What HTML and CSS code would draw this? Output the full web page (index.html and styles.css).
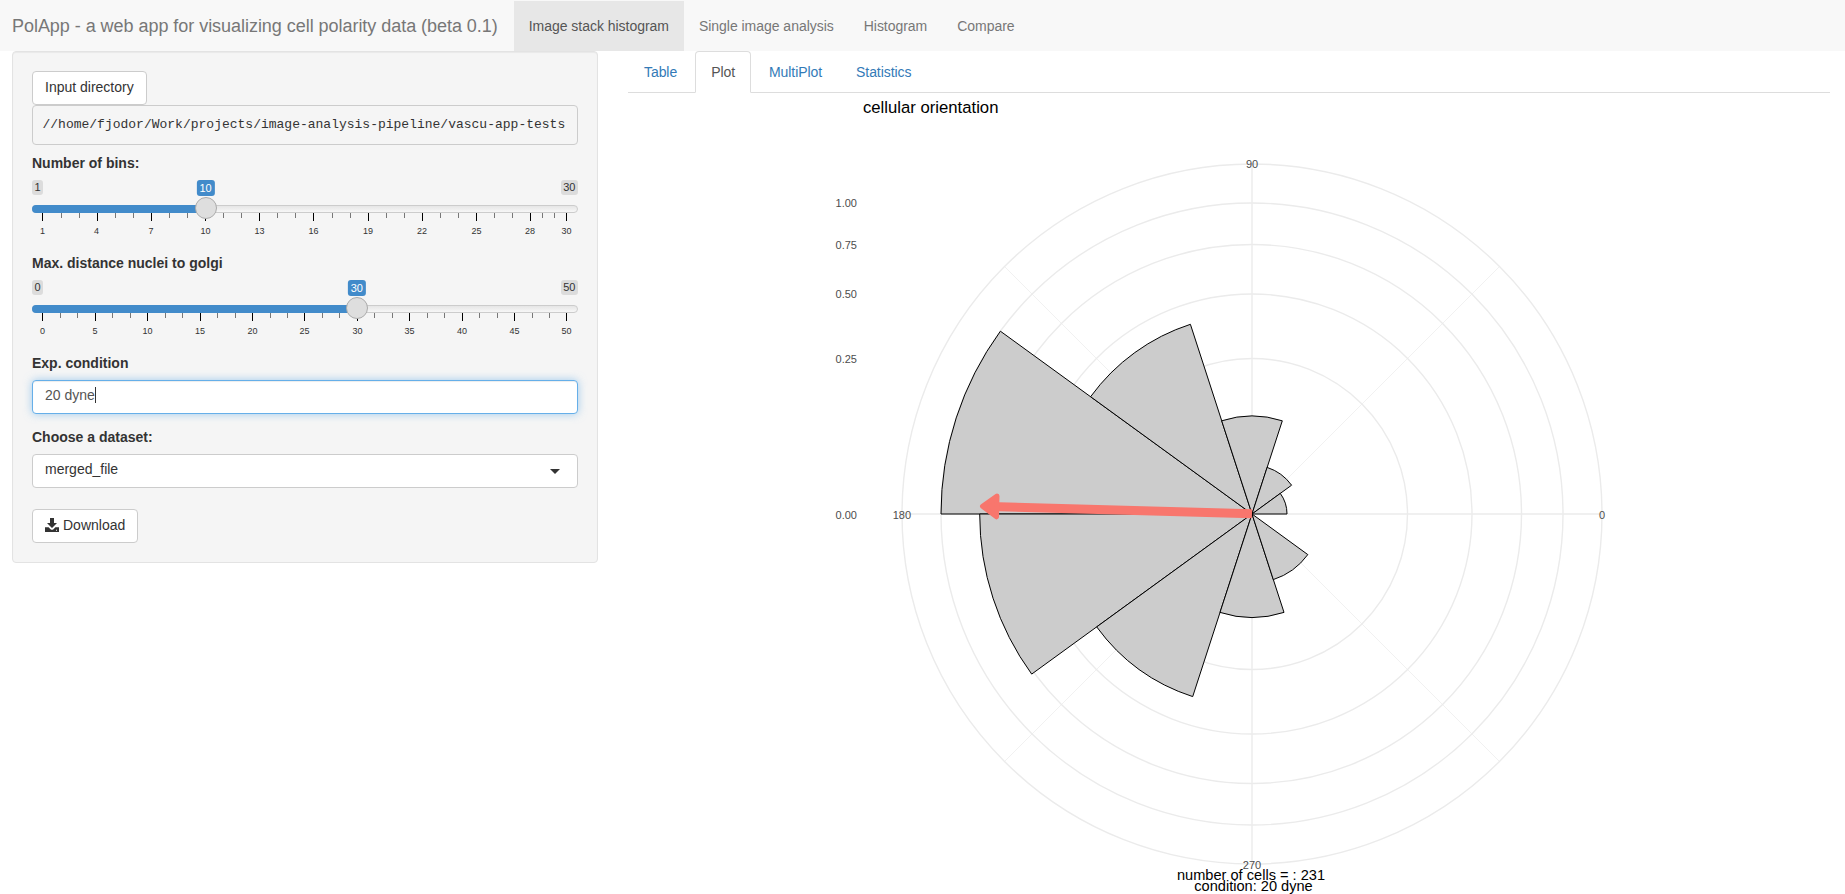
FILE: index.html
```html
<!DOCTYPE html>
<html lang="en">
<head>
    <meta charset="UTF-8">
    <meta name="viewport" content="width=device-width, initial-scale=1.0">
    <title>PolApp</title>
    <link rel="stylesheet" href="styles.css">
</head>
<body>
    <nav class="navbar">
        <span class="navbar-brand">PolApp - a web app for visualizing cell polarity data (beta 0.1)</span>
        <ul class="navbar-tabs">
            <li class="active"><a href="#">Image stack histogram</a></li>
            <li><a href="#">Single image analysis</a></li>
            <li><a href="#">Histogram</a></li>
            <li><a href="#">Compare</a></li>
        </ul>
    </nav>

    <div class="page">
        <aside class="well">
            <button type="button" class="btn">Input directory</button>
            <pre class="dir-path">//home/fjodor/Work/projects/image-analysis-pipeline/vascu-app-tests</pre>

            <div class="form-group first">
                <label class="control-label">Number of bins:</label>
                <div class="irs">
                    <div class="irs-limits"><span class="irs-limit">1</span><span class="irs-limit">30</span></div>
                    <div class="irs-line"><div class="irs-fill" style="width: 31.8%"></div></div>
                    <span class="irs-value" style="left: 31.8%">10</span>
                    <span class="irs-handle" style="left: 31.8%"></span>
                    <svg class="irs-grid" width="546" height="25">
                        <path class="tick-minor" d="M29.5 0v5M47.5 0v5M83.5 0v5M101.5 0v5M137.5 0v5M155.5 0v5M191.5 0v5M209.5 0v5M245.5 0v5M263.5 0v5M300.5 0v5M318.5 0v5M354.5 0v5M372.5 0v5M408.5 0v5M426.5 0v5M462.5 0v5M480.5 0v5M510.5 0v5M522.5 0v5"/>
                        <path class="tick-major" d="M10.5 0v8M65.5 0v8M119.5 0v8M173.5 0v8M227.5 0v8M281.5 0v8M336.5 0v8M390.5 0v8M444.5 0v8M498.5 0v8M534.5 0v8"/>
                        <text x="10.5" y="21">1</text>
                        <text x="64.5" y="21">4</text>
                        <text x="119" y="21">7</text>
                        <text x="173.5" y="21">10</text>
                        <text x="227.5" y="21">13</text>
                        <text x="281.5" y="21">16</text>
                        <text x="336" y="21">19</text>
                        <text x="390" y="21">22</text>
                        <text x="444.5" y="21">25</text>
                        <text x="498" y="21">28</text>
                        <text x="534.5" y="21">30</text>
                    </svg>
                </div>
            </div>

            <div class="form-group">
                <label class="control-label">Max. distance nuclei to golgi</label>
                <div class="irs">
                    <div class="irs-limits"><span class="irs-limit">0</span><span class="irs-limit">50</span></div>
                    <div class="irs-line"><div class="irs-fill" style="width: 59.5%"></div></div>
                    <span class="irs-value" style="left: 59.5%">30</span>
                    <span class="irs-handle" style="left: 59.5%"></span>
                    <svg class="irs-grid" width="546" height="25">
                        <path class="tick-minor" d="M28.5 0v5M45.5 0v5M80.5 0v5M98.5 0v5M133.5 0v5M150.5 0v5M185.5 0v5M203.5 0v5M238.5 0v5M255.5 0v5M290.5 0v5M307.5 0v5M342.5 0v5M360.5 0v5M395.5 0v5M412.5 0v5M447.5 0v5M465.5 0v5M500.5 0v5M517.5 0v5"/>
                        <path class="tick-major" d="M10.5 0v8M63.5 0v8M115.5 0v8M168.5 0v8M220.5 0v8M272.5 0v8M325.5 0v8M377.5 0v8M430.5 0v8M482.5 0v8M534.5 0v8"/>
                        <text x="10.5" y="21">0</text>
                        <text x="63" y="21">5</text>
                        <text x="115.5" y="21">10</text>
                        <text x="168" y="21">15</text>
                        <text x="220.5" y="21">20</text>
                        <text x="272.5" y="21">25</text>
                        <text x="325.5" y="21">30</text>
                        <text x="377.5" y="21">35</text>
                        <text x="430" y="21">40</text>
                        <text x="482.5" y="21">45</text>
                        <text x="534.5" y="21">50</text>
                    </svg>
                </div>
            </div>

            <div class="form-group field">
                <label class="control-label">Exp. condition</label>
                <div class="form-control focused">20 dyne<span class="caret-line"></span></div>
            </div>

            <div class="form-group field">
                <label class="control-label">Choose a dataset:</label>
                <div class="form-control select">merged_file<span class="select-arrow"></span></div>
            </div>

            <button type="button" class="btn btn-download">
                <svg class="icon-download" width="14" height="14" viewBox="0 0 14 14">
                    <path d="M5 0h4v5h3L7 10 2 5h3z"/>
                    <path d="M0 9.2h3.6l2.2 2.2c.7.6 1.7.6 2.4 0l2.2-2.2H14V14H0zM11 11.8h1v1h-1z" fill-rule="evenodd"/>
                </svg>
                Download
            </button>
        </aside>

        <main class="main-panel">
            <ul class="nav-tabs">
                <li><a href="#">Table</a></li>
                <li class="active"><a href="#">Plot</a></li>
                <li><a href="#">MultiPlot</a></li>
                <li><a href="#">Statistics</a></li>
            </ul>

            <svg class="plot" viewBox="628 93 1202 801" width="1202" height="801">
                <!-- grid -->
                <g class="grid-minor">
                    <path d="M1252 514L1499.5 266.5M1252 514L1004.5 266.5M1252 514L1004.5 761.5M1252 514L1499.5 761.5"/>
                </g>
                <g class="grid-major">
                    <circle cx="1252" cy="514" r="155.5"/>
                    <circle cx="1252" cy="514" r="220"/>
                    <circle cx="1252" cy="514" r="269.5"/>
                    <circle cx="1252" cy="514" r="311"/>
                    <circle cx="1252" cy="514" r="350"/>
                    <path d="M902 514H1602M1252 164V864"/>
                </g>

                <!-- bars -->
                <g class="bars">
                    <path d="M1252 514L1000.4 331.2A311 311 0 0 0 941 514Z"/>
                    <path d="M1252 514L1190.4 324.3A199.5 199.5 0 0 0 1090.6 396.7Z"/>
                    <path d="M1252 514L1282.3 420.8A98 98 0 0 0 1221.7 420.8Z"/>
                    <path d="M1252 514L1291.6 485.2A49 49 0 0 0 1267.1 467.4Z"/>
                    <path d="M1252 514L1287 514A35 35 0 0 0 1280.3 493.4Z"/>
                    <path d="M1252 514L979.7 514A272.3 272.3 0 0 0 1031.7 674.1Z"/>
                    <path d="M1252 514L1096.7 626.9A192 192 0 0 0 1192.7 696.6Z"/>
                    <path d="M1252 514L1220 612.4A103.5 103.5 0 0 0 1284 612.4Z"/>
                    <path d="M1252 514L1273.3 579.6A69 69 0 0 0 1307.8 554.6Z"/>
                </g>

                <!-- mean direction -->
                <line class="arrow-line" x1="1252" y1="513.8" x2="990" y2="506.4"/>
                <polygon class="arrow-head" points="997,496 982.5,506.2 996.5,516.8"/>

                <!-- axis labels -->
                <g class="axis-text">
                    <text class="end" x="857" y="207">1.00</text>
                    <text class="end" x="857" y="249">0.75</text>
                    <text class="end" x="857" y="298">0.50</text>
                    <text class="end" x="857" y="363">0.25</text>
                    <text class="end" x="857" y="519">0.00</text>
                    <text class="end" x="911" y="519">180</text>
                    <text x="1252" y="168">90</text>
                    <text x="1602" y="519">0</text>
                    <text x="1252" y="869">270</text>
                </g>

                <text class="plot-title" x="863" y="113">cellular orientation</text>
                <text class="plot-caption" x="1251" y="880">number of cells = : 231</text>
                <text class="plot-caption" x="1253.5" y="891">condition: 20 dyne</text>
            </svg>
        </main>
    </div>
</body>
</html>
```

FILE: styles.css
```css
* {
    box-sizing: border-box;
}

body {
    margin: 0;
    font-family: "Liberation Sans", Arial, sans-serif;
    font-size: 14px;
    line-height: 20px;
    color: #333;
    background-color: #fff;
    overflow: hidden;
}

a {
    text-decoration: none;
}

/* top navbar */
.navbar {
    display: flex;
    height: 51px;
    padding-top: 1px;
    background-color: #f8f8f8;
}

.navbar-brand {
    padding: 15px 16px 15px 12px;
    font-size: 18px;
    letter-spacing: -0.04px;
    color: #777;
    white-space: nowrap;
}

.navbar-tabs {
    display: flex;
    margin: 0;
    padding: 0;
    list-style: none;
}

.navbar-tabs a {
    display: block;
    height: 50px;
    padding: 15px;
    letter-spacing: -0.03px;
    color: #777;
}

.navbar-tabs .active a {
    color: #555;
    background-color: #e7e7e7;
}

/* page columns */
.page {
    display: flex;
    align-items: flex-start;
    padding: 0 15px 0 12px;
}

.well {
    flex: 0 0 586px;
    padding: 19px;
    background-color: #f5f5f5;
    border: 1px solid #e3e3e3;
    border-radius: 4px;
    box-shadow: inset 0 1px 1px rgba(0, 0, 0, 0.05);
}

.main-panel {
    flex: 1;
    margin-left: 30px;
}

/* sidebar controls */
.btn {
    display: block;
    height: 34px;
    padding: 5px 12px 7px;
    font-family: inherit;
    font-size: 14px;
    line-height: 20px;
    color: #333;
    background-color: #fff;
    border: 1px solid #ccc;
    border-radius: 4px;
}

.dir-path {
    margin: 0;
    padding: 9.5px;
    font-family: "Liberation Mono", "Courier New", monospace;
    font-size: 13px;
    line-height: 18.57px;
    color: #333;
    background-color: #f5f5f5;
    border: 1px solid #ccc;
    border-radius: 4px;
}

.form-group {
    margin-bottom: 15px;
}

.form-group.first {
    margin-top: 8px;
}

.form-group.field {
    margin-bottom: 13px;
}

.control-label {
    display: block;
    margin-bottom: 5px;
    font-weight: bold;
}

.field .control-label {
    margin-bottom: 7px;
}

.form-control {
    position: relative;
    height: 34px;
    padding: 4px 12px 8px;
    color: #555;
    background-color: #fff;
    border: 1px solid #ccc;
    border-radius: 4px;
}

.form-control.focused {
    border-color: #66afe9;
    box-shadow: inset 0 1px 1px rgba(0, 0, 0, 0.075), 0 0 8px rgba(102, 175, 233, 0.6);
}

.caret-line {
    display: inline-block;
    width: 1px;
    height: 16px;
    margin-bottom: -3px;
    background-color: #333;
}

.form-control.select {
    color: #333;
}

.select-arrow {
    position: absolute;
    top: 14px;
    right: 17px;
    width: 0;
    height: 0;
    border-style: solid;
    border-width: 5px 5px 0;
    border-color: #333 transparent transparent;
}

.btn-download {
    display: flex;
    align-items: center;
    gap: 4px;
    margin-top: 21px;
}

.icon-download {
    fill: #333;
}

/* range sliders */
.irs {
    position: relative;
    height: 60px;
    padding-top: 2px;
}

.irs-limits {
    display: flex;
    justify-content: space-between;
    height: 15px;
}

.irs-limit {
    padding: 1px 2.5px;
    font-size: 11px;
    line-height: 13px;
    color: #333;
    background-color: rgba(0, 0, 0, 0.1);
    border-radius: 3px;
}

.irs-line {
    height: 8px;
    margin-top: 10px;
    background: linear-gradient(to bottom, #ddd -50%, #fff 150%);
    border: 1px solid #ccc;
    border-radius: 8px;
}

.irs-fill {
    height: 8px;
    margin: -1px;
    background-color: #428bca;
    border-radius: 4px 0 0 4px;
}

.irs-value {
    position: absolute;
    top: 2px;
    padding: 1px 3px;
    font-size: 11px;
    line-height: 14px;
    color: #fff;
    background-color: #428bca;
    border-radius: 3px;
    transform: translateX(-50%);
}

.irs-handle {
    position: absolute;
    top: 19px;
    width: 22px;
    height: 22px;
    background-color: #dedede;
    border: 1px solid #ababab;
    border-radius: 50%;
    transform: translateX(-50%);
}

.irs-grid {
    display: block;
}

.irs-grid text {
    font-size: 9px;
    fill: #333;
    text-anchor: middle;
}

.tick-major {
    stroke: #000;
    stroke-width: 1;
}

.tick-minor {
    stroke: #777;
    stroke-width: 1;
}

/* main tabs */
.nav-tabs {
    display: flex;
    height: 42px;
    margin: 0;
    padding: 0;
    list-style: none;
    letter-spacing: -0.07px;
    border-bottom: 1px solid #ddd;
}

.nav-tabs li {
    margin-right: 2px;
}

.nav-tabs a {
    display: block;
    height: 42px;
    padding: 10px 15px;
    color: #337ab7;
    border: 1px solid transparent;
    border-radius: 4px 4px 0 0;
}

.nav-tabs .active a {
    color: #555;
    background-color: #fff;
    border-color: #ddd #ddd #fff;
}

/* polar plot */
.plot {
    display: block;
    font-family: "Liberation Sans", Arial, sans-serif;
}

.grid-minor path {
    fill: none;
    stroke: #ebebeb;
    stroke-width: 0.7;
}

.grid-major circle,
.grid-major path {
    fill: none;
    stroke: #ebebeb;
    stroke-width: 1.4;
}

.bars path {
    fill: #ccc;
    stroke: #000;
    stroke-width: 1;
    stroke-linejoin: round;
}

.arrow-line {
    stroke: #f8766d;
    stroke-width: 9;
}

.arrow-head {
    fill: #f8766d;
    stroke: #f8766d;
    stroke-width: 5;
    stroke-linejoin: round;
}

.axis-text text {
    font-size: 11px;
    fill: #4d4d4d;
    text-anchor: middle;
}

.axis-text .end {
    text-anchor: end;
}

.plot-title {
    font-size: 16.7px;
    fill: #000;
}

.plot-caption {
    font-size: 14.6px;
    fill: #000;
    text-anchor: middle;
}
```
